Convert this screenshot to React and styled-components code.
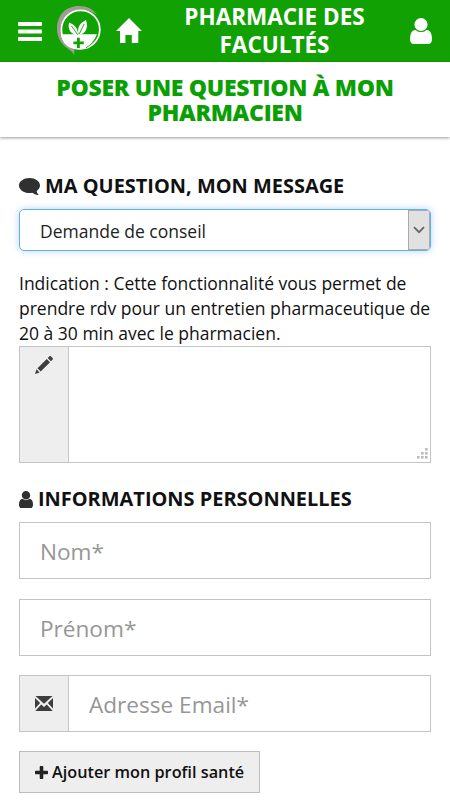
import { useState } from 'react';
import styled, { createGlobalStyle } from 'styled-components';

const GlobalStyle = createGlobalStyle`
  *, *::before, *::after {
    box-sizing: border-box;
  }
  html {
    overflow: hidden;
  }
  body {
    margin: 0;
    background: #fff;
    color: #111;
    font-family: 'Open Sans', 'Noto Sans', sans-serif;
  }
`;

const Page = styled.div`
  width: 450px;
  height: 800px;
  overflow: hidden;
`;

const NavBar = styled.header`
  display: flex;
  align-items: flex-start;
  height: 62px;
  padding: 0 18px 0 18px;
  background: #11a103;
  color: #fff;
`;

const NavButton = styled.a`
  display: block;
  flex: none;
  width: ${(props) => props.$width}px;
  margin-top: ${(props) => props.$top}px;
  margin-right: ${(props) => props.$gap || 0}px;
  color: inherit;
`;

const Brand = styled.div`
  flex: 1;
  padding: 3px 3px 0 0;
  text-align: center;
  font-size: 22.5px;
  line-height: 27.5px;
  font-weight: 700;
  white-space: nowrap;
`;

const PageTitle = styled.h1`
  height: 75px;
  margin: 0;
  padding-top: 13px;
  box-shadow: 0 1px 3px rgba(0, 0, 0, 0.4);
  color: #0a9f02;
  text-align: center;
  font-size: 23px;
  line-height: 25px;
  font-weight: 800;
  letter-spacing: -0.3px;
  white-space: nowrap;
`;

const Form = styled.form`
  display: flex;
  flex-direction: column;
  align-items: stretch;
  padding: 36px 19px 0;
`;

const SectionTitle = styled.h2`
  display: flex;
  align-items: center;
  gap: 5px;
  height: 26px;
  margin: ${(props) => props.$top || 0}px 0 0;
  font-size: 19.95px;
  line-height: 26px;
  font-weight: 700;
  white-space: nowrap;
`;

const SelectBox = styled.div`
  display: flex;
  height: 42px;
  margin-top: 10px;
  border: 1px solid #66afe9;
  border-radius: 5px;
  box-shadow: 0 0 7px rgba(102, 175, 233, 0.5);
  overflow: hidden;
`;

const SelectValue = styled.div`
  flex: 1;
  padding-left: 20px;
  color: #222;
  font-size: 17.5px;
  line-height: 43px;
`;

const SelectArrow = styled.div`
  display: flex;
  align-items: center;
  justify-content: center;
  width: 22px;
  border: 1px solid #aaa;
  background: #e1e1e1;
`;

const Hint = styled.p`
  margin: 20px 0 0;
  font-size: 17.5px;
  line-height: 25px;
  white-space: nowrap;
`;

const InputGroup = styled.div`
  display: flex;
  height: ${(props) => props.$height || 57}px;
  margin-top: ${(props) => props.$top}px;
  border: 1px solid #c4c4c4;
`;

const Addon = styled.span`
  display: flex;
  justify-content: center;
  flex: none;
  width: 49px;
  padding-top: ${(props) => props.$top}px;
  border-right: 1px solid #c8c8c8;
  background: #eee;
  color: #3d3d3d;
`;

const Input = styled.input`
  flex: 1;
  min-width: 0;
  padding: 1px 20px 0;
  border: 0;
  outline: 0;
  background: transparent;
  font: 400 22.6px 'Open Sans', sans-serif;
  color: #333;

  &::placeholder {
    color: #969696;
    opacity: 1;
  }
`;

const TextAreaWrap = styled.div`
  display: flex;
  flex: 1;
  position: relative;
`;

const TextArea = styled.textarea`
  flex: 1;
  padding: 10px 20px;
  border: 0;
  outline: 0;
  resize: none;
  font: 400 18px 'Open Sans', sans-serif;
`;

const Grip = styled.svg`
  position: absolute;
  right: 2px;
  bottom: 3px;
`;

const ProfileButton = styled.button`
  display: flex;
  align-items: center;
  align-self: flex-start;
  gap: 4px;
  width: 241px;
  height: 42px;
  margin-top: 19px;
  padding: 0 0 0 15px;
  border: 1px solid #bdbdbd;
  background: #eee;
  color: #111;
  font: 600 16.25px 'Open Sans', sans-serif;
  white-space: nowrap;
`;

const Icon = styled.svg`
  display: block;
  flex: none;
  fill: currentColor;
`;

const UserIcon = ({ width, height, color }) => (
  <Icon width={width} height={height} color={color} viewBox="0 128 1280 1536" preserveAspectRatio="none">
    <path d="M1280 1399q0 109-62.5 187t-150.5 78h-854q-88 0-150.5-78t-62.5-187q0-85 8.5-160.5t31.5-152 58.5-131 94-89 134.5-34.5q131 128 313 128t313-128q76 0 134.5 34.5t94 89 58.5 131 31.5 152 8.5 160.5zm-256-887q0 159-112.5 271.5t-271.5 112.5-271.5-112.5-112.5-271.5 112.5-271.5 271.5-112.5 271.5 112.5 112.5 271.5z" />
  </Icon>
);

const MenuIcon = () => (
  <Icon width="24" height="20" viewBox="0 0 24 20">
    <rect width="24" height="4" rx="0.7" />
    <rect y="7.5" width="24" height="4" rx="0.7" />
    <rect y="15" width="24" height="4" rx="0.7" />
  </Icon>
);

const Logo = () => (
  <Icon width="46" height="52" viewBox="0 0 46 52">
    <path d="M18 50.5C17 46 13 45 9 41.5C4 37 1 31 1 24C1 10 10 1 23 1C31 1 37 4 41 10C35 6 28 3.5 21 5.5C10 8.5 4 19 5.5 30C7 38 12 42 18.5 44Z" fill="#a09c95" />
    <circle cx="24.6" cy="24.5" r="19.2" fill="none" stroke="#fff" strokeWidth="1.7" />
    <path d="M4.8 29.3H41C38 39 31 44.5 23 44.5C12 44.5 6 38 4.8 29.3Z" />
    <path d="M41.5 29.3C39 35.5 35 40 30 42.8" fill="none" stroke="#11a103" strokeWidth="0.9" />
    <path d="M22 30C15 29.5 11.5 25 13 17.5C19 20 22 23.5 22 30ZM22.8 30C20.5 22.5 24 18 30 15C32.5 23 30 28.5 22.8 30Z" />
    <path d="M21.5 29.5L15.5 21M23.2 29L28.2 19" fill="none" stroke="#11a103" strokeWidth="0.9" />
    <path d="M21 32.8H23.8V36.5H27.8V39.2H23.8V43H21V39.2H17.4V36.5H21Z" fill="#11a103" />
  </Icon>
);

const HomeIcon = () => (
  <Icon width="26" height="26" viewBox="0 0 26 26">
    <path d="M13 0L26 13H22.3V25H15.8V17H9.4V25H4V13H0Z" />
  </Icon>
);

const CommentIcon = () => (
  <Icon width="21" height="17" viewBox="0 0 20 17" preserveAspectRatio="none" color="#303030">
    <path d="M10 0C4.5 0 0 3.3 0 7.4C0 11.6 4.5 15 10 15C11 15 11.8 14.9 12.6 14.7C14.2 15.8 16 16.6 18 16.9C18.6 17 18.7 16.5 18.3 16.1C17.4 15.2 17 14.2 16.8 12.9C18.8 11.5 20 9.6 20 7.4C20 3.3 15.5 0 10 0Z" />
  </Icon>
);

const PencilIcon = () => (
  <Icon width="18" height="18" viewBox="0 0 18 18">
    <path d="M0 18L1.5 13.2L4.6 16.4ZM2.5 12.2L11.8 3L15 6.2L5.7 15.5ZM12.7 2.1L14.3 0.5C14.9 -0.1 15.6 0 16.1 0.5L17.5 1.9C18.1 2.5 18.1 3.1 17.5 3.7L15.9 5.3Z" />
  </Icon>
);

const MailIcon = () => (
  <Icon width="18" height="15" viewBox="0 0 18 15">
    <path d="M0.5 0H17.5L9 7.8ZM0 2L5.1 7.1L0 12.5ZM18 2V12.5L12.9 7.1ZM6.2 8.4L9 11L11.8 8.4L17.7 15H0.3Z" />
  </Icon>
);

const PlusIcon = () => (
  <Icon width="13" height="13" viewBox="192 128 1408 1408" color="#222">
    <path d="M1600 736v192q0 40-28 68t-68 28h-416v416q0 40-28 68t-68 28h-192q-40 0-68-28t-28-68v-416h-416q-40 0-68-28t-28-68v-192q0-40 28-68t68-28h416v-416q0-40 28-68t68-28h192q40 0 68 28t28 68v416h416q40 0 68 28t28 68z" />
  </Icon>
);

const GRIP_DOTS = [[8, 0], [4, 4], [8, 4], [0, 8], [4, 8], [8, 8]];

const App = () => {
  const [values, setValues] = useState({
    message: '',
    nom: '',
    prenom: '',
    email: '',
  });

  const bind = (name) => ({
    name,
    value: values[name],
    onChange: (e) => setValues({ ...values, [name]: e.target.value }),
  });

  return (
    <Page>
      <GlobalStyle />
      <NavBar>
        <NavButton $width={24} $top={22} $gap={14}><MenuIcon /></NavButton>
        <NavButton $width={46} $top={5} $gap={14}><Logo /></NavButton>
        <NavButton $width={26} $top={18}><HomeIcon /></NavButton>
        <Brand>
          PHARMACIE DES
          <br />
          FACULTÉS
        </Brand>
        <NavButton $width={22} $top={18}><UserIcon width={22} height={26} /></NavButton>
      </NavBar>
      <PageTitle>
        POSER UNE QUESTION À MON
        <br />
        PHARMACIEN
      </PageTitle>
      <Form>
        <SectionTitle>
          <CommentIcon />
          MA QUESTION, MON MESSAGE
        </SectionTitle>
        <SelectBox>
          <SelectValue>Demande de conseil</SelectValue>
          <SelectArrow>
            <svg width="12" height="8" viewBox="0 0 12 8" fill="none" stroke="#666" strokeWidth="1.8">
              <path d="M1 1.2L6 6.2L11 1.2" />
            </svg>
          </SelectArrow>
        </SelectBox>
        <Hint>
          Indication : Cette fonctionnalité vous permet de
          <br />
          prendre rdv pour un entretien pharmaceutique de
          <br />
          20 à 30 min avec le pharmacien.
        </Hint>
        <InputGroup $height={117} $top={0}>
          <Addon $top={9}><PencilIcon /></Addon>
          <TextAreaWrap>
            <TextArea {...bind('message')} />
            <Grip width="11" height="11" fill="#bbb">
              {GRIP_DOTS.map(([x, y]) => (
                <rect key={`${x}-${y}`} x={x} y={y} width="2.6" height="2.6" />
              ))}
            </Grip>
          </TextAreaWrap>
        </InputGroup>
        <SectionTitle $top={23}>
          <UserIcon width={14} height={17} color="#303030" />
          INFORMATIONS PERSONNELLES
        </SectionTitle>
        <InputGroup $top={10}>
          <Input placeholder="Nom*" {...bind('nom')} />
        </InputGroup>
        <InputGroup $top={20}>
          <Input placeholder="Prénom*" {...bind('prenom')} />
        </InputGroup>
        <InputGroup $top={19}>
          <Addon $top={20}><MailIcon /></Addon>
          <Input placeholder="Adresse Email*" {...bind('email')} />
        </InputGroup>
        <ProfileButton type="button">
          <PlusIcon />
          Ajouter mon profil santé
        </ProfileButton>
      </Form>
    </Page>
  );
};

export default App;
